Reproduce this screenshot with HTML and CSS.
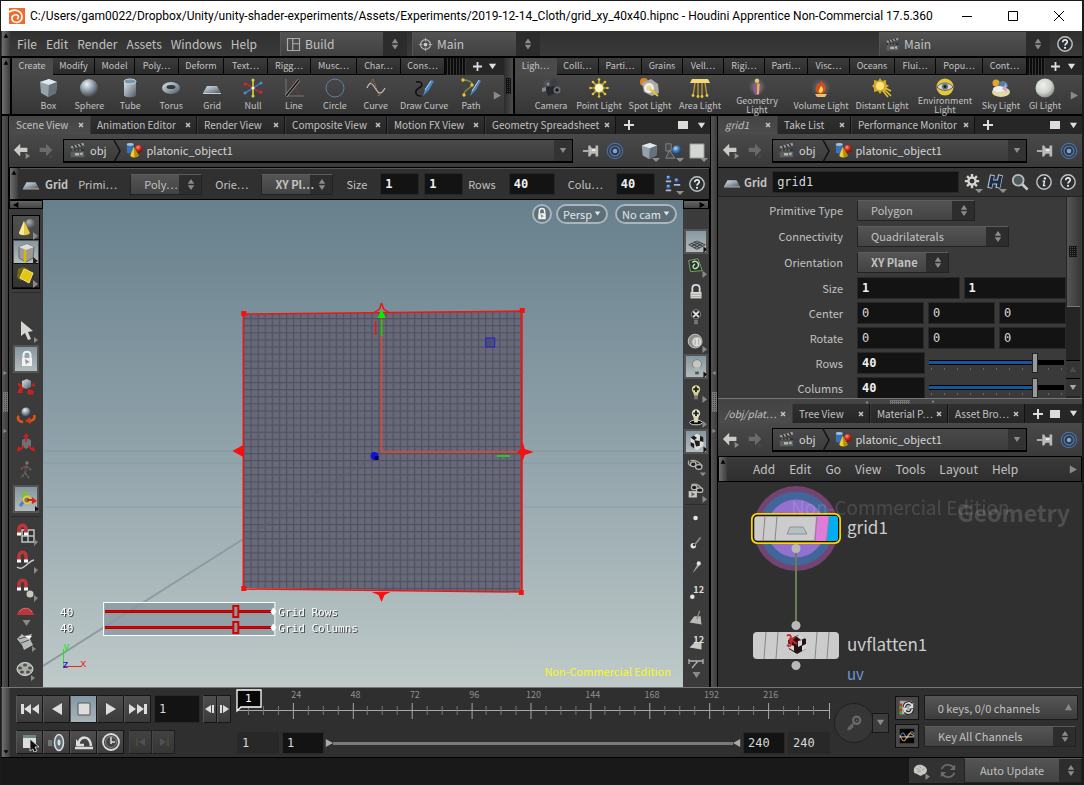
FILE: index.html
```html
<!DOCTYPE html>
<html lang="en">
<head>
<meta charset="utf-8">
<title>grid_xy_40x40.hipnc - Houdini Apprentice Non-Commercial</title>
<link rel="stylesheet" href="styles.css">
</head>
<body>
<svg class="sprite" aria-hidden="true">
  <defs>
    <linearGradient id="steel" x1="0" y1="0" x2="1" y2="1"><stop offset="0" stop-color="#dce3e8"/><stop offset=".5" stop-color="#98a4ad"/><stop offset="1" stop-color="#4d565e"/></linearGradient>
    <radialGradient id="ball" cx=".38" cy=".3" r=".75"><stop offset="0" stop-color="#eef3f6"/><stop offset=".5" stop-color="#8e99a3"/><stop offset="1" stop-color="#343b42"/></radialGradient>
    <radialGradient id="blueball" cx=".4" cy=".3" r=".7"><stop offset="0" stop-color="#b9d4f2"/><stop offset=".5" stop-color="#3f76b8"/><stop offset="1" stop-color="#173966"/></radialGradient>
    <radialGradient id="redball" cx=".4" cy=".3" r=".7"><stop offset="0" stop-color="#ff9a8a"/><stop offset=".5" stop-color="#d02a1c"/><stop offset="1" stop-color="#7d0d06"/></radialGradient>
    <radialGradient id="pearl" cx=".4" cy=".35" r=".7"><stop offset="0" stop-color="#f4f0f2"/><stop offset=".6" stop-color="#c9d4c8"/><stop offset="1" stop-color="#8d7e84"/></radialGradient>
    <radialGradient id="glow"><stop offset="0" stop-color="#fff6b0"/><stop offset=".5" stop-color="#e6c43c"/><stop offset="1" stop-color="#e6c43c" stop-opacity="0"/></radialGradient>
    <radialGradient id="halo"><stop offset=".3" stop-color="#ddd" stop-opacity=".7"/><stop offset="1" stop-color="#888" stop-opacity=".2"/></radialGradient>
    <linearGradient id="sky" x1="0" y1="0" x2="0" y2="1"><stop offset="0" stop-color="#67808c"/><stop offset=".52" stop-color="#91a3ab"/><stop offset="1" stop-color="#bfcac9"/></linearGradient>
    <pattern id="mesh" width="7.1" height="7.1" patternUnits="userSpaceOnUse" x="200" y="111"><rect width="8" height="8" fill="#676978"/><path d="M0 .5H8M.5 0V8" stroke="#4f5161" stroke-width="1.3"/></pattern>

    <symbol id="i-box" viewBox="0 0 20 20"><path d="M2 4L11 1l8 3-1 11-8 4-7-4z" fill="#96a2aa"/><path d="M2 4l9-3 8 3-8 3z" fill="#e1e8ec"/><path d="M11 7l8-3-1 11-8 4z" fill="#66717a"/></symbol>
    <symbol id="i-sphere" viewBox="0 0 20 20"><circle cx="10" cy="10" r="9" fill="url(#ball)"/></symbol>
    <symbol id="i-tube" viewBox="0 0 20 20"><path d="M4 3v14c0 3 12 3 12 0V3z" fill="url(#steel)"/><ellipse cx="10" cy="3.500" rx="6" ry="2.500" fill="#7899ad" stroke="#ccd5da"/></symbol>
    <symbol id="i-torus" viewBox="0 0 20 20"><ellipse cx="10" cy="10" rx="9" ry="6" fill="url(#steel)"/><ellipse cx="10" cy="9" rx="4.500" ry="2" fill="#31383e"/></symbol>
    <symbol id="i-grid" viewBox="0 0 20 20"><path d="M5 8h10l4 7H1z" fill="url(#steel)"/><path d="M1 15h18v1H1z" fill="#c8d0d4"/></symbol>
    <symbol id="i-null" viewBox="0 0 20 20"><path d="M10 2v16" stroke="#b7b92c" stroke-width="2"/><path d="M2 5l8 5 8 5" stroke="#bb2c2a" stroke-width="1.500"/><path d="M2 15l16-10" stroke="#4379b4" stroke-width="1.500"/><circle cx="10" cy="2" r="1.500" fill="#d7d93c"/><circle cx="10" cy="18" r="1.500" fill="#d7d93c"/><circle cx="2" cy="15" r="1.500" fill="#4f8dd0"/><circle cx="18" cy="5" r="1.500" fill="#4f8dd0"/><circle cx="2" cy="6" r="1.500" fill="#d23"/><circle cx="18" cy="14" r="1.500" fill="#d23"/><circle cx="10" cy="10" r="1.500" fill="#fff"/></symbol>
    <symbol id="i-line" viewBox="0 0 20 20"><path d="M2 1v17h18" stroke="#777" fill="none"/><path d="M8 4l8-2M10 8l6 9" stroke="#b33" stroke-dasharray="1.500 1.500"/><path d="M2 18L15 2" stroke="#999" stroke-width="3"/><path d="M2 18L15 2" stroke="#111" stroke-width="1.500"/></symbol>
    <symbol id="i-circle" viewBox="0 0 20 20"><circle cx="10" cy="10" r="9" fill="none" stroke="#5d80ad"/></symbol>
    <symbol id="i-curve" viewBox="0 0 20 20"><path d="M1 10L7 1l6 17 6-8" fill="none" stroke="#b98130" stroke-dasharray="1.500 1"/><path d="M1 10c3-7 5-5 8 0s6 8 10 0" fill="none" stroke="#bbb" stroke-width="1.200"/></symbol>
    <symbol id="i-draw" viewBox="0 0 20 20"><path d="M2 4c6-1 8 3 3 6s-4 8 2 8" fill="none" stroke="#101010" stroke-width="1.500"/><path d="M9 18l2-7 6-9 3 1-5 9z" fill="#4f86bf"/><path d="M11 12l6-9" stroke="#b1d2ef"/></symbol>
    <symbol id="i-path" viewBox="0 0 20 20"><path d="M2 2c6 0 9 2 9 5S1 12 3 18" fill="none" stroke="#7e8f35" stroke-width="1.300"/><path d="M9 18l2-6 7-10 2 1-5 9z" fill="#4f86bf"/><path d="M11 13l7-11" stroke="#b1d2ef"/><circle cx="2" cy="2" r="1.700" fill="#e7c62d"/><circle cx="11" cy="7" r="1.700" fill="#e7c62d"/><circle cx="3" cy="17" r="1.700" fill="#e7c62d"/></symbol>
    <symbol id="i-cam" viewBox="0 0 20 20"><circle cx="7" cy="6" r="4.500" fill="#4b5157"/><circle cx="13" cy="5" r="4" fill="#3a4046"/><path d="M4 9l10-1 1 7-8 3z" fill="#23282c"/><path d="M1 10l4-1v4l-4 1z" fill="#888"/><circle cx="16" cy="12" r="3.500" fill="#687078"/><circle cx="16" cy="12" r="1.700" fill="#15181a"/><circle cx="7" cy="6" r="1.500" fill="#888"/></symbol>
    <symbol id="i-point" viewBox="0 0 20 20"><path d="M10 1v18M1 10h18M4 4l12 12M16 4L4 16" stroke="#e0bf31" stroke-width="1.200"/><g fill="#e7c62d"><circle cx="10" cy="1.500" r="1.300"/><circle cx="10" cy="18.500" r="1.300"/><circle cx="1.500" cy="10" r="1.300"/><circle cx="18.500" cy="10" r="1.300"/><circle cx="4" cy="4" r="1.300"/><circle cx="16" cy="4" r="1.300"/><circle cx="4" cy="16" r="1.300"/><circle cx="16" cy="16" r="1.300"/></g><circle cx="10" cy="10" r="6" fill="url(#glow)"/><circle cx="10" cy="10" r="4" fill="#fff8c8"/></symbol>
    <symbol id="i-spot" viewBox="0 0 20 20"><circle cx="4" cy="4" r="4" fill="#e08320"/><path d="M2 5l9-4 7 5 1 9-7 3-8-4z" fill="#aaa"/><circle cx="9" cy="10" r="5" fill="#eee"/><circle cx="9" cy="10" r="2.500" fill="#e9d888"/><path d="M10 11l8 7" stroke="#e4c62c" stroke-width="2"/></symbol>
    <symbol id="i-area" viewBox="0 0 20 20"><path d="M2 1h16l2 4H0z" fill="#f3dc77"/><path d="M5 5L3 18M8 5v14M12 5v14M15 5l2 13" stroke="#caa62a" stroke-width="1.200"/><g fill="#e9c93b"><circle cx="3" cy="17.500" r="1.400"/><circle cx="8" cy="18.500" r="1.400"/><circle cx="12" cy="18.500" r="1.400"/><circle cx="17" cy="17.500" r="1.400"/></g></symbol>
    <symbol id="i-geo" viewBox="0 0 20 20"><circle cx="10" cy="10" r="9" fill="url(#halo)" opacity=".5"/><circle cx="10" cy="3" r="2.500" fill="#e6ca70"/><path d="M7 6h6l1 7-2 6H8l-2-6z" fill="#8b5ba0"/><path d="M10 6h3l-1 12h-2z" fill="#e8b43a"/></symbol>
    <symbol id="i-fire" viewBox="0 0 20 20"><circle cx="10" cy="10" r="9" fill="url(#halo)" opacity=".4"/><path d="M10 2c2 4 6 6 4 11-2 4-7 4-9 0-1-3 1-5 2-8l2 3z" fill="#df4a1c"/><path d="M10 8c2 2 3 4 1 6s-4 0-3-2z" fill="#ffe34d"/><path d="M4 16h12l-2 3H6z" fill="#e6c26a"/></symbol>
    <symbol id="i-sun" viewBox="0 0 20 20"><path d="M8 0l2 3 4-1v4l3 2-3 2v4l-4-1-2 3-2-3-4 1V10L0 8l2-2V2l4 1z" fill="#d7a829"/><circle cx="8" cy="8" r="4" fill="#fde77a"/><path d="M13 10l6 3M11 13l5 6M14 13l5 5" stroke="#e4c62c" stroke-width="1.500"/></symbol>
    <symbol id="i-eye" viewBox="0 0 20 20"><circle cx="10" cy="10" r="9.500" fill="#e3c83d"/><path d="M1 10c5-6 13-6 18 0-5 5-13 5-18 0z" fill="#d5d8da" stroke="#555"/><circle cx="10" cy="9.500" r="3.500" fill="#66727c"/><circle cx="10" cy="9.500" r="1.500" fill="#111"/></symbol>
    <symbol id="i-sky" viewBox="0 0 20 20"><circle cx="5" cy="5" r="3.500" fill="#e8a32a"/><path d="M7 9c0-8 10-8 10 0z" fill="#54809f"/><ellipse cx="10" cy="14" rx="9" ry="5" fill="#e4d8a8"/><ellipse cx="8" cy="11" rx="6" ry="3" fill="#eceef0"/><path d="M15 5l-4 6 5 3" fill="#c7a8c8"/></symbol>
    <symbol id="i-gi" viewBox="0 0 20 20"><circle cx="10" cy="10" r="9.500" fill="url(#pearl)"/></symbol>

    <symbol id="i-clap" viewBox="0 0 20 20"><path d="M2 5l15-4 1 3L3 8z" fill="#999"/><path d="M5 4l2 3M9 3l2 3M13 2l2 3" stroke="#222" stroke-width="1.500"/><path d="M2 8h16v10H2z" fill="#59605f"/><path d="M2 8h16v3H2z" fill="#333"/><path d="M4 9.500h2M8 9.500h2M12 9.500h2" stroke="#aaa"/><path d="M7 13h5v3H7zM13 13l3-1v4l-3-1z" fill="#b0b5b4"/></symbol>
    <symbol id="i-plato" viewBox="0 0 20 20"><path d="M1 3v9c0 2 8 2 8 0V3z" fill="#3a70b4"/><ellipse cx="5" cy="3" rx="4" ry="1.700" fill="#9fc1e4"/><circle cx="15" cy="8" r="4.500" fill="url(#redball)"/><path d="M9 6l6 10c-2 3-9 3-10 0z" fill="#f2cf2e"/><path d="M9 6l1 12c2 0 4-1 5-2z" fill="#b68c10"/></symbol>
    <symbol id="i-back" viewBox="0 0 20 20"><path d="M1 9l7-7v4.500h8v4.500H8V16z" fill="#c9cbc6"/><path d="M14 12l5 3.500-5 3.500z" fill="#8b8b8b"/></symbol>
    <symbol id="i-fwd" viewBox="0 0 20 20"><path d="M17 9l-7-7v4.500H3v4.500h7V16z" fill="#6a6a6a"/><path d="M14 13l4 3-4 3z" fill="#4a4a4a"/></symbol>
    <symbol id="i-pin" viewBox="0 0 20 20"><path d="M1 10h6" stroke="#ddd" stroke-width="1.500"/><path d="M7 4h2l2 3h4V4h3v12h-3v-3h-4l-2 3H7z" fill="#b9bbb8"/><path d="M11 8h4v2h-4z" fill="#eee"/></symbol>
    <symbol id="i-target" viewBox="0 0 20 20"><circle cx="10" cy="10" r="8.500" fill="#30394a" stroke="#4c6fa5" stroke-width="1.300"/><circle cx="10" cy="10" r="5.500" fill="none" stroke="#56789f" stroke-width="1.500"/><circle cx="10" cy="10" r="2.500" fill="#7ea3d8"/></symbol>
    <symbol id="i-help" viewBox="0 0 20 20"><circle cx="10" cy="10" r="8" fill="#2c3033" stroke="#bfc4c6" stroke-width="1.600"/><path d="M7.500 8c0-3.500 5.500-3.300 5 0-.2 1.600-2.500 1.800-2.500 3.800" fill="none" stroke="#eee" stroke-width="1.800"/><circle cx="10" cy="14.300" r="1.200" fill="#eee"/></symbol>
    <symbol id="i-info" viewBox="0 0 20 20"><circle cx="10" cy="10" r="8" fill="#2c3033" stroke="#bfc4c6" stroke-width="1.600"/><path d="M8.500 9h2l-1 5h2" fill="none" stroke="#eee" stroke-width="1.500"/><circle cx="11" cy="6" r="1.300" fill="#eee"/></symbol>
    <symbol id="i-search" viewBox="0 0 20 20"><circle cx="8" cy="8" r="6" fill="#4d5a60" stroke="#b9bcbc" stroke-width="2"/><path d="M12.500 12.500l6 6" stroke="#c9cccc" stroke-width="3"/></symbol>
    <symbol id="i-gear" viewBox="0 0 20 20"><path d="M10 1v16M2 9h16M4.500 3.500l11 11M15.500 3.500l-11 11" stroke="#d4d4d0" stroke-width="2.600"/><circle cx="10" cy="9" r="4" fill="#333" stroke="#d4d4d0" stroke-width="2.500"/></symbol>
    <symbol id="i-hwrite" viewBox="0 0 20 20"><path d="M6 2L3 17M15 2l-3 15M5 10h9" stroke="#b8c4d0" stroke-width="5.500"/><path d="M6 3L3.500 16M15 3l-2.500 13M5 10h9" stroke="#172a47" stroke-width="3.500"/></symbol>
    <symbol id="i-people" viewBox="0 0 20 20"><g fill="url(#blueball)"><circle cx="5" cy="3" r="2.500"/><circle cx="14" cy="6" r="2.500"/><circle cx="5" cy="13" r="2.500"/></g><path d="M2 7h6M11 11h7M2 17h6" stroke="#aebac8" stroke-width="2"/></symbol>
    <symbol id="i-shapes" viewBox="0 0 20 20"><path d="M2 2h6v8H2zM6 9l6 9H2z" fill="#484c50" stroke="#888"/><circle cx="14" cy="9" r="5" fill="url(#blueball)"/></symbol>
    <symbol id="i-square" viewBox="0 0 20 20"><path d="M2 2h16v16H2z" fill="#d4d6d2" stroke="#777"/></symbol>
    <symbol id="i-layout" viewBox="0 0 20 20"><path d="M2 2h16v16H2zM9 2v16M9 9h9" fill="none" stroke="#aaa" stroke-width="1.600"/></symbol>
    <symbol id="i-cross" viewBox="0 0 20 20"><circle cx="10" cy="10" r="6.500" fill="none" stroke="#bbb" stroke-width="1.500"/><circle cx="10" cy="10" r="2.500" fill="#ccc"/><path d="M10 1v5M10 14v5M1 10h5M14 10h5" stroke="#bbb"/></symbol>
    <symbol id="i-updown" viewBox="0 0 10 14"><path d="M5 0l4 6H1zM5 14l4-6H1z" fill="#8b8b8b"/></symbol>
    <symbol id="i-down" viewBox="0 0 10 10"><path d="M1 2h8L5 8z" fill="currentColor"/></symbol>
    <symbol id="i-up" viewBox="0 0 10 10"><path d="M1 8h8L5 1z" fill="currentColor"/></symbol>
    <symbol id="i-right" viewBox="0 0 10 10"><path d="M1 0l9 5-9 5z" fill="currentColor"/></symbol>
    <symbol id="i-left" viewBox="0 0 10 10"><path d="M9 0L0 5l9 5z" fill="currentColor"/></symbol>
    <symbol id="i-plus" viewBox="0 0 10 10"><path d="M5 0v10M0 5h10" stroke="#ddd" stroke-width="2"/></symbol>
    <symbol id="i-x" viewBox="0 0 10 10"><path d="M3 3l4 4M7 3L3 7" stroke="#c4c4c4" stroke-width="1.500"/></symbol>
    <symbol id="i-pane" viewBox="0 0 10 8"><path d="M0 0h10v8H0z" fill="#dcdcd8"/></symbol>

    <symbol id="s-more" viewBox="0 0 24 24"><path d="M19 16l5 4-5 4z" fill="#8a8a8a"/></symbol>
    <symbol id="s-cone" viewBox="0 0 24 24"><circle cx="16" cy="8" r="5" fill="url(#ball)" opacity=".6"/><path d="M10 5l6 12c-2 3-10 3-11 0z" fill="#e3c842"/><path d="M10 5v14c-3 0-5-1-5-2z" fill="#f7ea9a"/><use href="#s-more"/></symbol>
    <symbol id="s-edge" viewBox="0 0 24 24"><path d="M5 6l8-3 7 3-1 11-7 4-7-4z" fill="#9a9a96" stroke="#666"/><path d="M5 6l8-3 7 3-8 3z" fill="#ddd"/><path d="M11 9v12" stroke="#e0b800" stroke-width="2.500"/><path d="M19 16l5 4-5 4z" fill="#222"/></symbol>
    <symbol id="s-face" viewBox="0 0 24 24"><path d="M4 5l5-2 6 2-8 12-4-4z" fill="#766812"/><path d="M10 5l9 4-4 10-9-5z" fill="#e2c517" stroke="#f7e56c"/><use href="#s-more"/></symbol>
    <symbol id="s-arrow" viewBox="0 0 24 24"><path d="M7 2v15l4-3 3 7 3-1-3-7 5-1z" fill="#d6d6d2"/><path d="M20 18l4 3-4 3z" fill="#8a8a8a"/></symbol>
    <symbol id="s-lock" viewBox="0 0 24 24"><path d="M7 11h10v8H7z" fill="#f2f2f0"/><path d="M8.500 11V8c0-4.500 7-4.500 7 0v3" fill="none" stroke="#f2f2f0" stroke-width="2"/><path d="M10 12l5 3-3 1-1 2z" fill="#8a979b"/></symbol>
    <symbol id="s-move" viewBox="0 0 24 24"><path d="M4 8l4 1-1 3 3 1-2 3 1 2-6 0 2-4 1-2-2-1zM20 7l1 5-4-1zM14 14l6 2-1 4-6-1z" fill="#c8221b"/><path d="M8 6l5-2 4 2v6l-5 2-4-2z" fill="url(#steel)"/></symbol>
    <symbol id="s-rot" viewBox="0 0 24 24"><path d="M5 13c-3 3 1 6 4 6M20 12c2 4-2 6-5 6" fill="none" stroke="#e05415" stroke-width="2.500"/><path d="M16 14l-5 4 6 3z" fill="#d63a14"/><circle cx="12" cy="9" r="4.500" fill="url(#ball)"/></symbol>
    <symbol id="s-scale" viewBox="0 0 24 24"><path d="M8 9l4-2 5 2v6l-5 3-4-3z" fill="#6b7378"/><path d="M12 2l3 4h-2v5h-2V6H9zM3 21l1-6 2 2 4-3v2l-3 3zM21 21l-1-6-2 2-4-3v2l3 3z" fill="#c8221b"/></symbol>
    <symbol id="s-pose" viewBox="0 0 24 24"><circle cx="13" cy="4" r="1.700" fill="#777"/><path d="M12 7l-5 3M12 7l5 4M12 8l-1 6-4 5M11 14l4 5" stroke="#666" stroke-width="1.700" stroke-dasharray="3 1" fill="none"/><path d="M11 7l1 6" stroke="#833" stroke-width="1.500"/></symbol>
    <symbol id="s-handle" viewBox="0 0 24 24"><path d="M5 19l5-6" stroke="#4c7fc0" stroke-width="3"/><path d="M7 8l2-5 4 4-1 5-3 1z" fill="#7fbf2e"/><circle cx="12" cy="13" r="3.500" fill="#777" stroke="#e8ce2a" stroke-width="1.800"/><path d="M12 12h5v-2l5 4-5 3v-3h-5z" fill="#d8241b"/><path d="M20 19l4 3-4 3z" fill="#111"/></symbol>
    <symbol id="s-maggrid" viewBox="0 0 24 24"><path d="M8 8h12v12H8zM14 8v12M8 14h12" fill="#2c3434" stroke="#bfc4be" stroke-width="1.500"/><path d="M5 12V7c0-5 7-5 7 0v5" fill="none" stroke="#c0353a" stroke-width="3.500"/><path d="M3 12h4M10 12h4" stroke="#fff" stroke-width="3"/><path d="M20 17l4 3-4 4z" fill="#8a8a8a"/></symbol>
    <symbol id="s-magcurve" viewBox="0 0 24 24"><path d="M3 17c6 5 11-6 17-7" fill="none" stroke="#c8ccc6" stroke-width="1.500"/><path d="M5 11V6c0-5 7-5 7 0v5" fill="none" stroke="#c0353a" stroke-width="3.500"/><path d="M3 11h4M10 11h4" stroke="#fff" stroke-width="3"/><path d="M20 17l4 3-4 4z" fill="#8a8a8a"/></symbol>
    <symbol id="s-magpt" viewBox="0 0 24 24"><circle cx="16" cy="16" r="3.500" fill="#c9c9c0"/><path d="M5 11V6c0-5 7-5 7 0v5" fill="none" stroke="#c0353a" stroke-width="3.500"/><path d="M3 11h4M10 11h4" stroke="#fff" stroke-width="3"/><path d="M20 17l4 3-4 4z" fill="#8a8a8a"/></symbol>
    <symbol id="s-maghalf" viewBox="0 0 24 12"><path d="M3 9c1-8 16-8 17 0z" fill="#c0353a"/><path d="M5 6c3-5 10-5 13 0" fill="none" stroke="#e07a7c"/></symbol>
    <symbol id="s-flip" viewBox="0 0 24 24"><path d="M3 9l5-5 2 2 8-2-2 5 3 6-9 5-2-5z" fill="#b6bab8"/><path d="M5 9l10-3M7 13l8-3" stroke="#4c5456"/><path d="M11 6l7 0-3 3z" fill="#fff"/><path d="M18 16l4 3-4 3z" fill="#8a8a8a"/></symbol>
    <symbol id="s-reel" viewBox="0 0 24 24"><ellipse cx="11" cy="11" rx="8" ry="6.500" fill="#aaaca6" stroke="#d6d6d0"/><g fill="#4c504e"><ellipse cx="11" cy="7" rx="2" ry="1.500"/><ellipse cx="6" cy="10" rx="2" ry="1.500"/><ellipse cx="16" cy="10" rx="2" ry="1.500"/><ellipse cx="8" cy="14" rx="2" ry="1.500"/><ellipse cx="14" cy="14" rx="2" ry="1.500"/></g><path d="M17 17l4 3-4 3z" fill="#8a8a8a"/></symbol>

    <symbol id="v-plane" viewBox="0 0 24 24"><path d="M3 15l9-4 9 4-9 5z" fill="#8b989c" stroke="#444"/><path d="M6 13.500l9 5M9 12l9 4.500M6 16.500l9-4M9 18.500l9-5" stroke="#333"/><path d="M19 17l4 3-4 4z" fill="#111"/></symbol>
    <symbol id="v-ref" viewBox="0 0 24 24"><path d="M4 5l10-2 5 13-13 1z" fill="#29342a" stroke="#79a868"/><path d="M8 7c5-4 9 3 5 6s-6-3-2-4" fill="none" stroke="#c6e0c4" stroke-width="1.500"/><use href="#s-more"/></symbol>
    <symbol id="v-lock" viewBox="0 0 24 24"><path d="M6 12h12v7H6z" fill="#d9d9d4"/><path d="M6 14.500h12M6 17h12" stroke="#a9a9a4"/><path d="M8 12V8c0-5 8-5 8 0v4" fill="none" stroke="#d9d9d4" stroke-width="2"/></symbol>
    <symbol id="v-nolight" viewBox="0 0 24 24"><circle cx="12" cy="9" r="5" fill="#222" stroke="#888"/><path d="M9 6l6 6M15 6l-6 6" stroke="#ddd" stroke-width="2"/><path d="M10 15h4v5h-4z" fill="#777"/></symbol>
    <symbol id="v-balls" viewBox="0 0 24 24"><circle cx="11" cy="11" r="7.500" fill="#8f8f8a" stroke="#d0d0cc"/><circle cx="13" cy="12" r="5.500" fill="#deded8" stroke="#999"/><path d="M11 9v6M15 9v6" stroke="#999"/><use href="#s-more"/></symbol>
    <symbol id="v-bulb" viewBox="0 0 24 24"><circle cx="12" cy="9" r="5" fill="#c5c8bf" stroke="#777"/><path d="M9 12h6l-1 5h-4z" fill="#b3b6ad"/><path d="M10 17h4v3h-4z" fill="#555"/><path d="M19 17l4 3-4 4z" fill="#111"/></symbol>
    <symbol id="v-addbulb" viewBox="0 0 24 24"><circle cx="12" cy="9" r="4.500" fill="#dedd9f"/><path d="M9 12h6l-1 4h-4z" fill="#cdcc92"/><path d="M12 6v6M9 9h6" stroke="#222" stroke-width="2"/><path d="M10 16h4v4h-4z" fill="#777"/><use href="#s-more"/></symbol>
    <symbol id="v-shadow" viewBox="0 0 24 24"><ellipse cx="12" cy="18" rx="7" ry="2.500" fill="#080808" stroke="#ddd"/><circle cx="12" cy="8" r="4.500" fill="#e8e8c8"/><path d="M9 11h6l-1 7h-4z" fill="#d8d8b8"/><path d="M12 5v6M9 8h6" stroke="#222" stroke-width="2"/><use href="#s-more"/></symbol>
    <symbol id="v-check" viewBox="0 0 24 24"><path d="M5 7l7-4 7 4v9l-7 5-7-5z" fill="#ddd"/><path d="M5 7l3.500-2 3.500 2.500L9 10zM15.500 5L19 7v5l-4-1zM9 10l6 1v5l-4 1zM5 12l4 2v5l-4-3z" fill="#1c1c1c"/><path d="M19 17l4 3-4 4z" fill="#111"/></symbol>
    <symbol id="v-glass" viewBox="0 0 24 24"><path d="M4 5c-1 4 1 6 3 5M6 5c5-1 9 1 13 6" fill="none" stroke="#a9aca7" stroke-width="1.500"/><ellipse cx="9" cy="9" rx="3" ry="2.500" fill="#1b1e1f" stroke="#b8bab5" stroke-width="1.300"/><ellipse cx="15" cy="12" rx="3.500" ry="2.500" fill="#1b1e1f" stroke="#b8bab5" stroke-width="1.300"/><path d="M16 18h7l-3.500 4z" fill="#8a8a8a"/></symbol>
    <symbol id="v-glass2" viewBox="0 0 24 24"><path d="M7 4c5-2 9 1 12 5" fill="none" stroke="#a9aca7" stroke-width="1.500"/><ellipse cx="10" cy="7" rx="3" ry="2.500" fill="#1b1e1f" stroke="#b8bab5" stroke-width="1.300"/><ellipse cx="16" cy="10" rx="3.500" ry="2.500" fill="#1b1e1f" stroke="#b8bab5" stroke-width="1.300"/><path d="M4 11h9v7H4z" fill="#c8c8c2"/><path d="M7 12l4 2.500-4 2.500z" fill="#666"/><use href="#s-more"/></symbol>
    <symbol id="v-dot" viewBox="0 0 24 24"><circle cx="11.500" cy="12" r="2.500" fill="#e5e5e0"/></symbol>
    <symbol id="v-norm" viewBox="0 0 24 24"><path d="M9 16l8-10" stroke="#7e8a90" stroke-width="2"/><circle cx="9" cy="15" r="3" fill="#e5e5e0"/><circle cx="10" cy="14" r="1.500" fill="#333"/></symbol>
    <symbol id="v-trail" viewBox="0 0 24 24"><path d="M8 18l6-11 2 2z" fill="#a9aca7"/><circle cx="15" cy="7" r="2.300" fill="#e5e5e0"/></symbol>
    <symbol id="v-ptnum" viewBox="0 0 24 24"><text x="9" y="12" font-size="10" font-weight="700" fill="#ddd">12</text><circle cx="8" cy="16" r="2.500" fill="#e5e5e0"/></symbol>
    <symbol id="v-prim" viewBox="0 0 24 24"><path d="M5 17l5-7 7 0 1 9z" fill="#b9bbb6"/><path d="M13 13l3-9" stroke="#888" stroke-width="1.500"/></symbol>
    <symbol id="v-primnum" viewBox="0 0 24 24"><path d="M5 17l6-6h7v8z" fill="#c9cbc6"/><text x="9" y="12" font-size="10" font-weight="700" fill="#ddd">12</text></symbol>
    <symbol id="v-vert" viewBox="0 0 24 12"><path d="M5 3h14M5 1v5M19 1v5M8 10l6-7" stroke="#aeb2ae" stroke-width="1.300"/></symbol>
  </defs>
</svg>

<div class="app">
  <header class="titlebar">
    <svg class="logo" viewBox="0 0 16 16" aria-hidden="true"><path d="M0 0h16v16H0z" fill="#f26a2b"/><path d="M0 4c6-4 13-1 13 5 0 5-6 7-9 4-3-4 1-7 4-6 2 1 2 3 0 4" fill="none" stroke="#fff" stroke-width="1.700"/></svg>
    <h1>C:/Users/gam0022/Dropbox/Unity/unity-shader-experiments/Assets/Experiments/2019-12-14_Cloth/grid_xy_40x40.hipnc - Houdini Apprentice Non-Commercial 17.5.360</h1>
    <div class="winbtns">
      <button aria-label="Minimize"><svg viewBox="0 0 12 12"><path d="M1 6.500h10" stroke="#000"/></svg></button>
      <button aria-label="Maximize"><svg viewBox="0 0 12 12"><path d="M1.500 1.500h9v9h-9z" fill="none" stroke="#000"/></svg></button>
      <button aria-label="Close"><svg viewBox="0 0 12 12"><path d="M1 1l10 10M11 1L1 11" stroke="#000"/></svg></button>
    </div>
  </header>

  <nav class="menubar">
    <span class="handle"><svg><use href="#i-up"/></svg></span>
    <div class="menus"><button>File</button><button>Edit</button><button>Render</button><button>Assets</button><button>Windows</button><button>Help</button></div>
    <div class="combo desk"><svg class="ic"><use href="#i-layout"/></svg><select aria-label="Desktop"><option>Build</option></select><svg class="ud"><use href="#i-updown"/></svg></div>
    <div class="combo radial"><svg class="ic"><use href="#i-cross"/></svg><select aria-label="Radial menu"><option>Main</option></select><svg class="ud"><use href="#i-updown"/></svg></div>
    <div class="combo scene"><svg class="ic"><use href="#i-clap"/></svg><select aria-label="Main scene"><option>Main</option></select><svg class="ud"><use href="#i-updown"/></svg></div>
    <button class="icon" aria-label="Help"><svg><use href="#i-help"/></svg></button>
  </nav>

  <div class="shelves">
    <span class="handle"><svg><use href="#i-up"/></svg></span>
    <section class="shelf shelf-a">
      <div class="shelf-tabs"><button class="on">Create</button><button>Modify</button><button>Model</button><button>Poly…</button><button>Deform</button><button>Text…</button><button>Rigg…</button><button>Musc…</button><button>Char…</button><button>Cons…</button><span class="stripes"></span><span class="extra"><svg><use href="#i-plus"/></svg><svg><use href="#i-down"/></svg></span></div>
      <div class="tools">
        <button><svg><use href="#i-box"/></svg>Box</button><button><svg><use href="#i-sphere"/></svg>Sphere</button><button><svg><use href="#i-tube"/></svg>Tube</button><button><svg><use href="#i-torus"/></svg>Torus</button><button><svg><use href="#i-grid"/></svg>Grid</button><button><svg><use href="#i-null"/></svg>Null</button><button><svg><use href="#i-line"/></svg>Line</button><button><svg><use href="#i-circle"/></svg>Circle</button><button><svg><use href="#i-curve"/></svg>Curve</button><button><svg><use href="#i-draw"/></svg>Draw Curve</button><button><svg><use href="#i-path"/></svg>Path</button><span class="next"><svg><use href="#i-right"/></svg></span>
      </div>
    </section>
    <span class="shelf-grip"><i class="dots"></i></span>
    <section class="shelf shelf-b">
      <div class="shelf-tabs"><button class="on">Ligh…</button><button>Colli…</button><button>Parti…</button><button>Grains</button><button>Vell…</button><button>Rigi…</button><button>Parti…</button><button>Visc…</button><button>Oceans</button><button>Flui…</button><button>Popu…</button><button>Cont…</button><span class="stripes"></span><span class="extra"><svg><use href="#i-plus"/></svg><svg><use href="#i-down"/></svg></span></div>
      <div class="tools">
        <button><svg><use href="#i-cam"/></svg>Camera</button><button><svg><use href="#i-point"/></svg>Point Light</button><button><svg><use href="#i-spot"/></svg>Spot Light</button><button><svg><use href="#i-area"/></svg>Area Light</button><button class="two"><svg><use href="#i-geo"/></svg>Geometry<br>Light</button><button><svg><use href="#i-fire"/></svg>Volume Light</button><button><svg><use href="#i-sun"/></svg>Distant Light</button><button class="two"><svg><use href="#i-eye"/></svg>Environment<br>Light</button><button><svg><use href="#i-sky"/></svg>Sky Light</button><button><svg><use href="#i-gi"/></svg>GI Light</button><span class="next"><svg><use href="#i-right"/></svg></span>
      </div>
    </section>
  </div>

  <main class="work">
    <span class="gutter"><svg><use href="#i-right"/></svg><i class="dots"></i><svg><use href="#i-right"/></svg></span>
    <section class="pane scene-pane">
      <div class="tabs tabs-scene">
        <button class="on">Scene View<svg><use href="#i-x"/></svg></button><button>Animation Editor<svg><use href="#i-x"/></svg></button><button>Render View<svg><use href="#i-x"/></svg></button><button>Composite View<svg><use href="#i-x"/></svg></button><button>Motion FX View<svg><use href="#i-x"/></svg></button><button>Geometry Spreadsheet<svg><use href="#i-x"/></svg></button>
        <span class="tab-end"><svg class="plus"><use href="#i-plus"/></svg><svg class="pn"><use href="#i-pane"/></svg><svg class="dn"><use href="#i-down"/></svg></span>
      </div>
      <div class="pathbar">
        <button class="icon" aria-label="Back"><svg><use href="#i-back"/></svg></button><button class="icon" aria-label="Forward"><svg><use href="#i-fwd"/></svg></button>
        <div class="path"><svg class="ic"><use href="#i-clap"/></svg><a href="#obj">obj</a><svg class="chev" viewBox="0 0 8 22"><path d="M1 0l6 11-6 11" fill="none" stroke="#111" stroke-width="1.500"/></svg><svg class="ic"><use href="#i-plato"/></svg><a href="#platonic">platonic_object1</a><button class="drop" aria-label="Path history"><svg><use href="#i-down"/></svg></button></div>
        <button class="icon" aria-label="Pin"><svg><use href="#i-pin"/></svg></button><button class="icon" aria-label="Link"><svg><use href="#i-target"/></svg></button>
        <span class="view-icons"><button class="icon more" aria-label="Shading"><svg><use href="#i-box"/></svg></button><button class="icon more" aria-label="Objects"><svg><use href="#i-shapes"/></svg></button><button class="icon more" aria-label="Layout"><svg><use href="#i-square"/></svg></button></span>
      </div>
      <div class="opbar">
        <span class="handle"><svg><use href="#i-up"/></svg></span>
        <div class="opitems">
          <svg class="ic"><use href="#i-grid"/></svg><b>Grid</b>
          <label for="op-prim">Primi…</label><span class="pick w72"><select id="op-prim"><option>Poly…</option></select><svg class="ud"><use href="#i-updown"/></svg></span>
          <label for="op-ori">Orie…</label><span class="pick w72"><select id="op-ori" class="bold"><option>XY Pl…</option></select><svg class="ud"><use href="#i-updown"/></svg></span>
          <label for="op-sx">Size</label><input id="op-sx" class="field bold w38" value="1"><input aria-label="Size Y" class="field bold w38" value="1">
          <label for="op-r">Rows</label><input id="op-r" class="field bold w46" value="40">
          <label for="op-c">Colu…</label><input id="op-c" class="field bold w38" value="40">
          <span class="view-icons"><button class="icon more" aria-label="Groups"><svg><use href="#i-people"/></svg></button><button class="icon" aria-label="Help"><svg><use href="#i-help"/></svg></button></span>
        </div>
      </div>
      <div class="stage">
        <div class="side side-l">
          <span class="grab"><svg><use href="#i-left"/></svg></span>
          <div class="group"><button aria-label="Objects"><svg><use href="#s-cone"/></svg></button><button class="on" aria-label="Edges"><svg><use href="#s-edge"/></svg></button><button aria-label="Primitives"><svg><use href="#s-face"/></svg></button></div>
          <hr>
          <div class="stack first"><button aria-label="Select"><svg><use href="#s-arrow"/></svg></button><button class="on" aria-label="Secure selection"><svg><use href="#s-lock"/></svg></button><button aria-label="Move"><svg><use href="#s-move"/></svg></button><button aria-label="Rotate"><svg><use href="#s-rot"/></svg></button><button aria-label="Scale"><svg><use href="#s-scale"/></svg></button><button aria-label="Pose"><svg><use href="#s-pose"/></svg></button><button class="on" aria-label="Handles"><svg><use href="#s-handle"/></svg></button></div>
          <hr>
          <div class="stack"><button aria-label="Snap to grid"><svg><use href="#s-maggrid"/></svg></button><button aria-label="Snap to curve"><svg><use href="#s-magcurve"/></svg></button><button aria-label="Snap to point"><svg><use href="#s-magpt"/></svg></button><svg class="half"><use href="#s-maghalf"/></svg><svg class="morearrow"><use href="#i-down"/></svg><button aria-label="Flipbook"><svg><use href="#s-flip"/></svg></button><button aria-label="Render"><svg><use href="#s-reel"/></svg></button></div>
        </div>
        <div class="viewport">
          <svg class="scene-art" viewBox="0 0 639 487" preserveAspectRatio="none">
            <rect width="639" height="487" fill="url(#sky)"/>
            <path d="M0 251h639M0 263h639M0 307h639" stroke="#76868e" stroke-opacity=".35"/>
            <path d="M0 466L200 339" stroke="#8d9aa2" stroke-width="2"/>
            <path d="M200 114L478 111 477 392 200 388z" fill="url(#mesh)"/>
            <path d="M200 339L330 257" stroke="#596270" stroke-width="2" opacity=".6"/>
            <path d="M478 111L200 114V389L477 392" fill="none" stroke="#f01414" stroke-width="1.500"/>
            <path d="M478 111V392" stroke="#f01414" stroke-width="2"/>
            <path d="M338 114V252H477" fill="none" stroke="#e8452f" stroke-width="1.500"/>
            <path d="M338 136v-16" stroke="#00e000" stroke-width="1.500"/><path d="M338 109l4 9h-8z" fill="#00f000"/><path d="M453 256h13" stroke="#2cc42c" stroke-width="2"/>
            <path d="M332 121v14M338 103l-2 6-6 4M338 103l2 6 6 4" fill="none" stroke="#f01414" stroke-width="1.500"/>
            <path d="M189 251l11-6v12zM490 252l-9-3-2-7-2 7-4 3 4 3 2 6 2-6zM338 402l-3-7-7-3h19l-6 3z" fill="#f81010"/>
            <path d="M198 111h5v5h-5zM476 108h5v5h-5zM475 390h5v5h-5zM198 386h5v5h-5z" fill="#f81010"/>
            <path d="M442 138h9v9h-9z" fill="#4d4e75" stroke="#1e1ed0"/>
            <circle cx="331" cy="256" r="4" fill="#1212d8"/><path d="M331 256h4v4h-4z" fill="#000060"/>
            <path d="M60.500 402.500h171v33h-171z" fill="#8999a0" fill-opacity=".8" stroke="#fff"/>
            <path d="M62 411.500h167M62 427.500h167" stroke="#9c0000" stroke-width="3"/><path d="M62 411.500h167M62 427.500h167" stroke="#e80000" stroke-width="1.500"/>
            <path d="M190 406h5v11h-5zM190 422h5v11h-5z" fill="#8999a0" stroke="#d80000" stroke-width="2"/>
            <path d="M227 411.500l3-4 3 4-3 4zM227 427.500l3-4 3 4-3 4z" fill="#fff"/>
            <path d="M20.500 466v-17" stroke="#20e820"/><path d="M20 466.500h18" stroke="#f02020"/>
            <g class="hud"><text x="17" y="416">40</text><text x="17" y="432">40</text><text x="235" y="416">Grid Rows</text><text x="235" y="432">Grid Columns</text></g>
            <g class="axis"><text x="20" y="450" fill="#20e820">y</text><text x="37" y="467" fill="#f02020">x</text><text x="19" y="468" fill="#1010f0">z</text></g>
          </svg>
          <div class="camera-bar"><button class="round" aria-label="Lock camera"><svg><use href="#s-lock"/></svg></button><button>Persp<svg><use href="#i-down"/></svg></button><button>No cam<svg><use href="#i-down"/></svg></button></div>
          <p class="edition">Non-Commercial Edition</p>
        </div>
        <div class="side side-r">
          <span class="grab"><svg><use href="#i-right"/></svg></span>
          <div class="stack first"><button class="on" aria-label="Reference plane"><svg><use href="#v-plane"/></svg></button><button aria-label="Guides"><svg><use href="#v-ref"/></svg></button><button aria-label="Lock"><svg><use href="#v-lock"/></svg></button><button aria-label="No lighting"><svg><use href="#v-nolight"/></svg></button><button aria-label="Headlight"><svg><use href="#v-balls"/></svg></button><button class="on" aria-label="Normal lighting"><svg><use href="#v-bulb"/></svg></button><button aria-label="High quality"><svg><use href="#v-addbulb"/></svg></button><button aria-label="Shadows"><svg><use href="#v-shadow"/></svg></button><button class="on" aria-label="Materials"><svg><use href="#v-check"/></svg></button><button aria-label="Visibility"><svg><use href="#v-glass"/></svg></button><button aria-label="Snapshot"><svg><use href="#v-glass2"/></svg></button></div>
          <hr>
          <div class="stack"><button aria-label="Points"><svg><use href="#v-dot"/></svg></button><button aria-label="Point normals"><svg><use href="#v-norm"/></svg></button><button aria-label="Point trails"><svg><use href="#v-trail"/></svg></button><button aria-label="Point numbers"><svg><use href="#v-ptnum"/></svg></button><button aria-label="Primitive normals"><svg><use href="#v-prim"/></svg></button><button aria-label="Primitive numbers"><svg><use href="#v-primnum"/></svg></button><svg class="half"><use href="#v-vert"/></svg><svg class="morearrow"><use href="#i-down"/></svg></div>
        </div>
      </div>
    </section>
    <span class="gutter mid"><svg><use href="#i-left"/></svg><i class="dots"></i><svg><use href="#i-right"/></svg></span>
    <div class="right">
      <section class="pane params-pane">
        <div class="tabs tabs-param">
          <button class="on it">grid1<svg><use href="#i-x"/></svg></button><button>Take List<svg><use href="#i-x"/></svg></button><button>Performance Monitor<svg><use href="#i-x"/></svg></button>
          <span class="tab-end"><svg class="plus"><use href="#i-plus"/></svg><svg class="pn"><use href="#i-pane"/></svg><svg class="dn"><use href="#i-down"/></svg></span>
        </div>
        <div class="pathbar">
          <button class="icon" aria-label="Back"><svg><use href="#i-back"/></svg></button><button class="icon" aria-label="Forward"><svg><use href="#i-fwd"/></svg></button>
          <div class="path"><svg class="ic"><use href="#i-clap"/></svg><a href="#obj">obj</a><svg class="chev" viewBox="0 0 8 22"><path d="M1 0l6 11-6 11" fill="none" stroke="#111" stroke-width="1.500"/></svg><svg class="ic"><use href="#i-plato"/></svg><a href="#platonic">platonic_object1</a><button class="drop" aria-label="Path history"><svg><use href="#i-down"/></svg></button></div>
          <button class="icon" aria-label="Pin"><svg><use href="#i-pin"/></svg></button><button class="icon" aria-label="Link"><svg><use href="#i-target"/></svg></button>
        </div>
        <div class="nodebar"><svg class="ic"><use href="#i-grid"/></svg><label for="nodename">Grid</label><input id="nodename" class="field" value="grid1"><button class="icon more" aria-label="Settings"><svg><use href="#i-gear"/></svg></button><button class="icon more" aria-label="Houdini"><svg><use href="#i-hwrite"/></svg></button><button class="icon" aria-label="Search"><svg><use href="#i-search"/></svg></button><button class="icon" aria-label="Info"><svg><use href="#i-info"/></svg></button><button class="icon" aria-label="Help"><svg><use href="#i-help"/></svg></button></div>
        <div class="param-area">
          <div class="params">
            <div class="row tall"><label for="p1">Primitive Type</label><span class="pick w118"><select id="p1"><option>Polygon</option></select><svg class="ud"><use href="#i-updown"/></svg></span></div>
            <div class="row tall"><label for="p2">Connectivity</label><span class="pick w152"><select id="p2"><option>Quadrilaterals</option></select><svg class="ud"><use href="#i-updown"/></svg></span></div>
            <div class="row tall"><label for="p3">Orientation</label><span class="pick w92"><select id="p3" class="bold"><option>XY Plane</option></select><svg class="ud"><use href="#i-updown"/></svg></span></div>
            <div class="row"><label for="p4">Size</label><span class="fields"><input id="p4" class="field bold" value="1"><input aria-label="Size Y" class="field bold" value="1"></span></div>
            <div class="row"><label for="p5">Center</label><span class="fields"><input id="p5" class="field" value="0"><input aria-label="Center Y" class="field" value="0"><input aria-label="Center Z" class="field" value="0"></span></div>
            <div class="row"><label for="p6">Rotate</label><span class="fields"><input id="p6" class="field" value="0"><input aria-label="Rotate Y" class="field" value="0"><input aria-label="Rotate Z" class="field" value="0"></span></div>
            <div class="row"><label for="p7">Rows</label><span class="fields"><input id="p7" class="field bold w68" value="40"><input type="range" aria-label="Rows slider" min="1" max="50" value="40"></span></div>
            <div class="row"><label for="p8">Columns</label><span class="fields"><input id="p8" class="field bold w68" value="40"><input type="range" aria-label="Columns slider" min="1" max="50" value="40"></span></div>
          </div>
          <div class="vscroll"><span class="thumb"><i class="dots"></i></span><svg class="dim"><use href="#i-up"/></svg><svg class="lit"><use href="#i-down"/></svg></div>
        </div>
      </section>
      <span class="hsplit"><svg><use href="#i-up"/></svg><i class="dots"></i><svg><use href="#i-down"/></svg></span>
      <section class="pane net-pane">
        <div class="tabs tabs-net">
          <button class="on it">/obj/plat…<svg><use href="#i-x"/></svg></button><button>Tree View<svg><use href="#i-x"/></svg></button><button>Material P…<svg><use href="#i-x"/></svg></button><button>Asset Bro…<svg><use href="#i-x"/></svg></button>
          <span class="tab-end"><svg class="plus"><use href="#i-plus"/></svg><svg class="pn"><use href="#i-pane"/></svg><svg class="dn"><use href="#i-down"/></svg></span>
        </div>
        <div class="pathbar">
          <button class="icon" aria-label="Back"><svg><use href="#i-back"/></svg></button><button class="icon" aria-label="Forward"><svg><use href="#i-fwd"/></svg></button>
          <div class="path"><svg class="ic"><use href="#i-clap"/></svg><a href="#obj">obj</a><svg class="chev" viewBox="0 0 8 22"><path d="M1 0l6 11-6 11" fill="none" stroke="#111" stroke-width="1.500"/></svg><svg class="ic"><use href="#i-plato"/></svg><a href="#platonic">platonic_object1</a><button class="drop" aria-label="Path history"><svg><use href="#i-down"/></svg></button></div>
          <button class="icon" aria-label="Pin"><svg><use href="#i-pin"/></svg></button><button class="icon" aria-label="Link"><svg><use href="#i-target"/></svg></button>
        </div>
        <div class="netmenu"><span class="handle"><svg><use href="#i-up"/></svg></span><div class="menus"><button>Add</button><button>Edit</button><button>Go</button><button>View</button><button>Tools</button><button>Layout</button><button>Help</button></div><svg class="nxt"><use href="#i-right"/></svg></div>
        <div class="network">
          <p class="context">Geometry</p>
          <svg class="wires" width="364" height="204" viewBox="0 0 364 204" aria-hidden="true">
            <circle cx="78" cy="46.500" r="42.500" fill="#73446f"/><circle cx="78" cy="46.500" r="37" fill="#426699"/><circle cx="78" cy="46.500" r="29" fill="#9371cf"/>
            <path d="M78 66v78" stroke="#6d7c58" stroke-width="2"/>
            <circle cx="78" cy="66.500" r="4.500" fill="#b9b9b9"/><circle cx="78" cy="143.500" r="4.500" fill="#b9b9b9"/><circle cx="78" cy="183.500" r="4.500" fill="#b9b9b9"/>
            <rect x="34" y="32" width="88" height="29" rx="5" fill="#ccc" stroke="#ffd000" stroke-width="2"/><rect x="35.500" y="33.500" width="85" height="26" rx="4" fill="#ccc" stroke="#111" stroke-width="1.500"/>
            <path d="M98 34h13l-2 25H96z" fill="#df7bd9"/><path d="M111 34h7q2 0 2 3v19q0 3-2 3h-10z" fill="#00adf2"/>
            <path d="M47 34l-2 25M59 34l-2 25M99 34l-2 25M111 34l-2 25" stroke="#888"/>
            <path d="M72 45h13l4 7H69z" fill="#b6bfc4" stroke="#87929a"/>
            <rect x="35" y="150" width="86" height="27" rx="4" fill="#ccc"/><path d="M48 150l-2 27M60 150l-2 27M99 150l-2 27M111 150l-2 27" stroke="#888"/>
            <path d="M70 158l10-5 8 4v10l-9 5-8-5z" fill="#241416"/><path d="M78 154l4-1 5 3-4 2zM71 162l5 2v5l-5-3zM80 159l4-1v5l-4 2zM84 164l4-2v5l-4 2z" fill="#d8d4d4"/><path d="M69 154c3-3 5 1 3 3l7 5M69 163c3 3 6-1 3-4l5-4" stroke="#cf2b2b" stroke-width="1.800" fill="none"/>
          </svg>
          <p class="mark">Non-Commercial Edition</p>
          <span class="node n1">grid1</span><span class="node n2">uvflatten1</span><span class="node n3">uv</span>
        </div>
      </section>
    </div>
  </main>

  <footer class="playbar">
    <span class="handle low"><svg><use href="#i-down"/></svg></span>
    <div class="play-left">
      <div class="line">
        <div class="btns"><button aria-label="First frame"><svg viewBox="0 0 20 14"><path d="M1 2h3v10H1zM11 2v10L4 7zM19 2v10l-7-5z"/></svg></button><button aria-label="Play back"><svg viewBox="0 0 20 14"><path d="M15 1v12L5 7z"/></svg></button><button class="on" aria-label="Stop"><svg viewBox="0 0 20 14"><path d="M4 1h12v12H4z" stroke="#555"/></svg></button><button aria-label="Play"><svg viewBox="0 0 20 14"><path d="M5 1v12l10-6z"/></svg></button><button aria-label="Last frame"><svg viewBox="0 0 20 14"><path d="M16 2h3v10h-3zM9 2v10l7-5zM1 2v10l7-5z"/></svg></button></div>
        <input class="field frame" aria-label="Current frame" value="1">
        <div class="btns thin"><button aria-label="Step back"><svg viewBox="0 0 12 14"><path d="M7 3v8L1 7zM8 3h2v8H8z"/></svg></button><button aria-label="Step forward"><svg viewBox="0 0 12 14"><path d="M5 3v8l6-4zM2 3h2v8H2z"/></svg></button></div>
      </div>
      <div class="line">
        <div class="btns small"><button aria-label="Scoping"><svg viewBox="0 0 20 20"><path d="M3 3h13v13H3z" fill="#ddd"/><path d="M3 3h13v3H3z" fill="#698a7c"/><path d="M10 7v12l3-2 1 3 3-1-2-4h4z" fill="#111" stroke="#ddd" stroke-width=".8"/></svg></button><button aria-label="Audio"><svg viewBox="0 0 20 20"><path d="M1 8h4v6H1z" fill="#777"/><path d="M5 8l6-6v17l-6-5z" fill="#42545a"/><ellipse cx="12" cy="10.500" rx="4.500" ry="8" fill="#5e6f74" stroke="#ddd" stroke-width="1.500"/><ellipse cx="12" cy="10.500" rx="1.500" ry="3"/></svg></button><button aria-label="Loop mode"><svg viewBox="0 0 20 20"><path d="M1 16h18M3 13h7M4 13c2-10 12-10 13 1" fill="none" stroke="#ddd" stroke-width="2.500"/><path d="M2 7v7h6z" fill="#ddd"/></svg></button><button aria-label="Real time"><svg viewBox="0 0 20 20"><circle cx="10" cy="10" r="8" fill="none" stroke="#ddd" stroke-width="1.800"/><circle cx="10" cy="10" r="5.500" fill="none" stroke="#888"/><path d="M10 5v7M10 10h4" stroke="#ddd" stroke-width="1.500"/></svg></button></div>
        <div class="btns off"><button disabled aria-label="Previous key"><svg viewBox="0 0 12 12"><path d="M1 2h2v8H1z" fill="#48683c"/><path d="M10 2v8L4 6z" fill="#666"/></svg></button><button disabled aria-label="Next key"><svg viewBox="0 0 12 12"><path d="M9 2h2v8H9z" fill="#48683c"/><path d="M2 2v8l6-4z" fill="#666"/></svg></button></div>
      </div>
    </div>
    <div class="timeline">
      <div class="ruler">
        <div class="nums"><span>24</span><span>48</span><span>72</span><span>96</span><span>120</span><span>144</span><span>168</span><span>192</span><span>216</span></div>
        <svg class="ticks" viewBox="0 0 594 18" preserveAspectRatio="none" shape-rendering="crispEdges"><path d="M0 8.500h594" stroke="#aaa"/><path d="M56.500 1v16M116.500 1v16M175.500 1v16M235.500 1v16M294.500 1v16M354.500 1v16M413.500 1v16M473.500 1v16M532.500 1v16M593.500 1v16" stroke="#a8a8a8"/><path d="M11.500 4v9M26.500 4v9M41.500 4v9M71.500 4v9M86.500 4v9M101.500 4v9M130.500 4v9M145.500 4v9M160.500 4v9M190.500 4v9M205.500 4v9M220.500 4v9M249.500 4v9M264.500 4v9M279.500 4v9M309.500 4v9M324.500 4v9M339.500 4v9M368.500 4v9M383.500 4v9M398.500 4v9M428.500 4v9M443.500 4v9M458.500 4v9M487.500 4v9M502.500 4v9M517.500 4v9M547.500 4v9M562.500 4v9M577.500 4v9" stroke="#777"/></svg>
        <svg class="flag" viewBox="0 0 26 24" aria-hidden="true"><path d="M1 22V1h24v17H5z" fill="#080808" stroke="#fff" stroke-width="1.300"/></svg><span class="flagnum">1</span>
      </div>
      <div class="line">
        <input class="field dull" aria-label="Global start" value="1"><input class="field" aria-label="Range start" value="1">
        <svg class="range-cap"><use href="#i-right"/></svg><span class="range-line"></span><svg class="range-cap end"><use href="#i-left"/></svg>
        <input class="field" aria-label="Range end" value="240"><input class="field dull" aria-label="Global end" value="240">
      </div>
    </div>
    <div class="keying"><button class="key" aria-label="Set key"><svg viewBox="0 0 20 20"><circle cx="13" cy="7" r="4" fill="none" stroke="#6a6a6a" stroke-width="2.500"/><circle cx="13" cy="7" r="1" fill="#6a6a6a"/><path d="M10 10l-7 8M4 14l3 3M6 12l3 3" stroke="#6a6a6a" stroke-width="2"/></svg></button><button class="keydrop" aria-label="Key options"><svg><use href="#i-down"/></svg></button></div>
    <div class="channels">
      <div class="line"><button class="sq" aria-label="Auto update channels"><svg viewBox="0 0 20 20"><path d="M2 2h13v15H2z" fill="#aaa"/><path d="M3 5v3M3 11v3" stroke="#d22" stroke-width="3"/><path d="M3 8v3M3 14v3" stroke="#3a3" stroke-width="3"/><path d="M7 9c1-6 7-6 9-1M16 11c-1 6-7 6-9 1" fill="none" stroke="#222" stroke-width="4"/><path d="M7 9c1-6 7-6 9-1M16 11c-1 6-7 6-9 1" fill="none" stroke="#ddd" stroke-width="1.800"/><path d="M17 4v6h-5zM6 16v-6h5z" fill="#ddd"/></svg></button><button class="wide">0 keys, 0/0 channels<svg><use href="#i-up"/></svg></button></div>
      <div class="line"><button class="sq" aria-label="Channel graph"><svg viewBox="0 0 20 20"><path d="M2 2h16v16H2z" fill="#050505"/><path d="M2 12c4-12 6 0 8 0s4-12 8-4" fill="none" stroke="#4b88c8" stroke-width="1.300"/><path d="M2 9c3 8 5 8 8 2s4-4 8-1" fill="none" stroke="#d78b2a" stroke-width="1.300"/><path d="M2 11h16" stroke="#ddd"/></svg></button><span class="pick keyall"><select aria-label="Key scope"><option>Key All Channels</option></select><svg class="ud"><use href="#i-updown"/></svg></span></div>
    </div>
  </footer>
  <div class="status">
    <div class="status-tools"><button class="icon" aria-label="Cache"><svg viewBox="0 0 20 20"><path d="M2 9c0-6 8-8 12-4 5 3 2 9-2 9-2 3-5 0-7-1-3 0-3-2-3-4z" fill="#c9c9c4"/><path d="M5 7l4 2M8 4l2 3M11 9l3-2M6 11l4-1" stroke="#999"/><path d="M15 13l5 3-5 4z" fill="#8a8a8a"/></svg></button><button class="icon" aria-label="Recook"><svg viewBox="0 0 20 20"><path d="M3 8c2-6 10-6 13-2M17 12c-2 6-10 6-13 2" fill="none" stroke="#6c6c6c" stroke-width="2"/><path d="M18 3v6h-6zM2 17v-6h6z" fill="#6c6c6c"/></svg></button>
    <span class="pick auto"><select aria-label="Update mode"><option>Auto Update</option></select><svg class="ud"><use href="#i-updown"/></svg></span></div>
  </div>
</div>
</body>
</html>
```

FILE: styles.css
```css
* { box-sizing: border-box; }
html, body { height: 100%; }
body { margin: 0; background: #2b2b2b; color: #c2c2c2; font: 11px/16px "Noto Sans CJK JP", "Noto Sans", sans-serif; }
button, select, input { margin: 0; padding: 0; border: 0; border-radius: 0; background: none; color: inherit; font: inherit; min-width: 0; }
select { appearance: none; outline: 0; }
a { color: inherit; text-decoration: none; }
p, h1 { margin: 0; font-weight: 400; }
svg { display: block; flex: none; }
.sprite { position: absolute; width: 0; height: 0; }
.bold { font-weight: 700; }

.app { display: flex; flex-direction: column; min-height: 100vh; padding: 1px 2px 1px 1px; background: #1b1b1b; overflow: hidden; }

.titlebar { display: flex; align-items: center; height: 30px; padding-left: 8px; background: #fff; color: #000; }
.logo { width: 16px; height: 16px; margin-right: 5px; }
.titlebar h1 { flex: 1; min-width: 0; font: 12px/20px Roboto, sans-serif; white-space: nowrap; }
.winbtns { display: flex; }
.winbtns button { display: grid; place-items: center; width: 46px; height: 30px; }
.winbtns svg { width: 12px; height: 12px; }

.handle { display: flex; justify-content: center; flex: none; width: 8px; margin-right: 2px; padding-top: 2px; background: linear-gradient(90deg, #707070, #3c3c3c); color: #000; }
.handle svg { width: 8px; height: 6px; }
.handle.low { align-items: flex-end; padding-bottom: 2px; }

.menubar { display: flex; height: 27px; padding-left: 1px; border-bottom: 2px solid #000; background: linear-gradient(#303030, #3a3a3a); font-size: 12px; }
.menus { display: flex; align-items: center; gap: 9px; padding-left: 5px; }
.menubar .icon { margin: 0 5px 0 3px; }
.combo { display: flex; align-items: center; margin-top: 1px; padding-left: 5px; border-left: 1px solid #555; background: linear-gradient(90deg, transparent calc(100% - 24px), #2c2c2c calc(100% - 24px)), linear-gradient(#525252, #414141); }
.combo .ic { width: 15px; height: 15px; margin-right: 4px; }
.combo select { flex: 1; }
.combo .ud { width: 8px; height: 14px; margin-right: 8px; }
.desk { width: 127px; margin-left: 23px; }
.radial { width: 128px; margin-left: 5px; }
.scene { width: 171px; margin-left: auto; }
.icon { display: grid; place-items: center; flex: none; width: 24px; }
.icon svg { width: 18px; height: 18px; }
.more { position: relative; }
.more::after { content: ""; position: absolute; right: 1px; bottom: -2px; border: solid transparent; border-width: 4px 4px 0; border-top-color: #8f8f8f; }

.shelves { display: flex; height: 58px; padding-left: 1px; border-bottom: 2px solid #000; background: #000; }
.shelf { display: flex; flex-direction: column; min-width: 0; background: #262626; font-size: 9px; line-height: 10px; }
.shelf-a { flex: 492; }
.shelf-b { flex: 567; }
.shelf-tabs { display: grid; height: 17px; }
.shelf-a .shelf-tabs { grid-template-columns: 41fr 42fr 40fr 44fr 45fr 44fr 43fr 46fr 44fr 44fr 21fr 38fr; }
.shelf-b .shelf-tabs { grid-template-columns: 42fr 42fr 43fr 41fr 41fr 41fr 43fr 42fr 45fr 41fr 47fr 44fr 18fr 37fr; }
.shelf-tabs button { border: solid #050505; border-width: 0 1px 1px 0; background: linear-gradient(#3c3c3c, #2a2a2a); white-space: nowrap; overflow: hidden; }
.shelf-tabs .on { border-color: #4a4a4a; background: #4a4a4a; }
.stripes { background: repeating-linear-gradient(90deg, #0c0c0c 0 2px, #333 2px 3px); }
.extra { display: flex; align-items: center; justify-content: space-evenly; color: #ddd; }
.extra svg { width: 9px; height: 9px; }
.tools { display: grid; flex: 1; border-top: 1px solid #4a4a4a; background: linear-gradient(#484848, #363636); }
.shelf-a .tools { grid-template-columns: repeat(9, 41fr) 56fr 38fr 14fr; padding-left: 16px; }
.shelf-b .tools { grid-template-columns: 48fr 48fr 54fr 46fr 68fr 60fr 62fr 64fr 48fr 40fr 17fr; padding-left: 12px; }
.tools button { display: flex; flex-direction: column; align-items: center; gap: 1px; padding-top: 2px; white-space: nowrap; line-height: 14px; }
.tools svg { width: 20px; height: 20px; }
.tools .two { gap: 0; line-height: 9px; }
.tools .two svg { height: 18px; }
.next { display: grid; place-items: center; color: #8a8a8a; }
.tools .next svg { width: 8px; height: 9px; }
.shelf-grip { display: grid; place-items: center; width: 9px; margin-right: 2px; background: linear-gradient(90deg, #2c2c2c, #4c4c4c); }
.dots { display: block; width: 5px; height: 20px; background: conic-gradient(from 90deg at 1px 1px, transparent 90deg, #8a8a8a 0) 0 0 / 2px 2px; opacity: .7; }
.shelf-grip .dots { height: 16px; filter: brightness(0); }

.work { display: flex; flex: 1; min-height: 570px; }
.gutter { display: flex; flex-direction: column; align-items: center; justify-content: center; gap: 16px; flex: none; width: 8px; border: solid #000; border-width: 0 1px; background: linear-gradient(90deg, #555, #3c3c3c); color: #8a8a8a; }
.gutter svg { width: 4px; height: 6px; }
.pane { display: flex; flex-direction: column; min-width: 0; background: #3a3a3a; }
.scene-pane { flex: 701; }
.right { display: flex; flex-direction: column; flex: 364; min-width: 0; }

.tabs { display: grid; flex: none; height: 18px; background: #262626; font-size: 10px; line-height: 16px; }
.tabs-scene { grid-template-columns: 81fr 107fr 88fr 102fr 98fr 131fr 94fr; }
.tabs-param { grid-template-columns: 59fr 74fr 124fr 107fr; }
.tabs-net { height: 19px; grid-template-columns: 74fr 78fr 78fr 77fr 57fr; }
.tabs button { display: flex; align-items: center; justify-content: space-between; padding: 0 3px 0 6px; border-right: 1px solid #111; border-left: 1px solid #3a3a3a; background: linear-gradient(#303030, #262626); white-space: nowrap; }
.tabs .on { border-color: #494949; background: linear-gradient(#444, #4c4c4c); }
.tabs .it { font-style: italic; }
.tabs button svg { width: 10px; height: 10px; }
.tab-end { display: flex; align-items: center; padding: 0 4px 0 8px; color: #ddd; }
.plus { width: 10px; height: 10px; margin-right: auto; }
.pn { width: 10px; height: 8px; margin-right: 9px; }
.dn { width: 9px; height: 9px; }

.pathbar { display: flex; align-items: center; flex: none; height: 33px; padding: 0 1px; background: linear-gradient(#494949, #3a3a3a); }
.path { display: flex; align-items: stretch; flex: 1; height: 24px; margin: 0 6px 0 5px; border: 1px solid #000; border-bottom-width: 2px; background: linear-gradient(#494949, #3c3c3c); color: #d6d6d6; }
.path .ic { width: 17px; height: 17px; align-self: center; margin: 0 4px 0 5px; }
.path a { line-height: 20px; }
.chev { width: 8px; height: 22px; margin-left: 6px; }
.drop { display: grid; place-items: center; width: 18px; margin-left: auto; background: #333; color: #8b8b8b; }
.drop svg { width: 8px; height: 9px; }
.view-icons { display: flex; padding-left: 10px; }

.opbar { display: flex; flex: none; height: 33px; border: 1px solid #000; background: #303030; }
.opitems { display: flex; align-items: center; flex: 1; gap: 5px; border-top: 1px solid #555; padding-left: 2px; white-space: nowrap; }
.opitems .ic { width: 18px; height: 18px; }
.opitems label { margin-left: 5px; }
.opitems .pick + label, .opitems .w46 + label { margin-left: 8px; }
.opitems .field + .field + label { margin-left: 0; }
.opitems label + .pick, .opitems label + .field { margin-left: 8px; }
.opitems .view-icons { margin-left: auto; padding: 0; }
.pick { display: flex; align-items: center; height: 21px; border: 1px solid #222; border-top-color: #5c5c5c; background: linear-gradient(90deg, transparent calc(100% - 22px), #2d2d2d calc(100% - 22px)), linear-gradient(#545454, #434343); }
.pick select { flex: 1; padding-left: 13px; height: 19px; line-height: 17px; }
.pick .ud { width: 8px; height: 13px; margin-right: 6px; }
.w72 { width: 72px; } .w92 { width: 92px; } .w118 { width: 118px; } .w152 { width: 152px; }
.w38 { width: 39px; } .w46 { width: 46px; }
.field { height: 22px; padding-left: 4px; border: 1px solid #282828; background: #131313; color: #f0f0f0; font-family: "DejaVu Sans Mono", monospace; font-size: 12px; }
.field:not(.bold) { color: #d8d8d8; }
.opitems .field { flex: none; }

.stage { display: flex; flex: 1; min-height: 0; }
.side { display: flex; flex-direction: column; flex: none; background: #3b3b3b; }
.side-l { width: 34px; align-items: center; }
.side-r { width: 27px; align-items: center; border-right: 1px solid #000; }
.grab { display: flex; flex: none; align-self: stretch; height: 9px; padding: 1px 3px; border: 1px solid #000; background: linear-gradient(#666, #444); color: #000; }
.side-r .grab { justify-content: flex-end; }
.grab svg { width: 6px; height: 6px; }
.group { margin-top: 6px; border: 1px solid #000; background: linear-gradient(#505050, #333); }
.side button { display: grid; place-items: center; flex: none; width: 26px; height: 28px; }
.side .group button { height: 24px; border-bottom: 1px solid #111; }
.side button svg { width: 24px; height: 24px; }
.side .on { border: 2px solid #555; background: linear-gradient(#8597a0, #b3bcbe); }
.side .group .on { border-width: 1px; }
.side hr { align-self: stretch; margin: 3px 2px; border: 0; border-top: 1px solid #2c2c2c; }
.stack { display: flex; flex-direction: column; align-items: center; }
.side-l .first { margin-top: 21px; }
.side-l .half { width: 24px; height: 12px; margin-top: 2px; }
.side .morearrow { width: 11px; height: 10px; color: #8a8a8a; }
.side-r button { height: 25px; width: 24px; }
.side-r hr { margin: 0 2px; }
.side-r .first { margin-top: 20px; }
.side-r button svg { width: 22px; height: 22px; }
.side-r .half { width: 24px; height: 12px; margin-top: 3px; }
.viewport { position: relative; flex: 1; min-width: 0; background: #91a3ab; }
.scene-art { position: absolute; inset: 0; width: 100%; height: 100%; }
.hud { font: 11px "DejaVu Sans Mono", monospace; fill: #fff; }
.hud text { filter: drop-shadow(1px 1px 0 #444); }
.axis { font: 11px "DejaVu Sans Mono", monospace; }
.camera-bar { position: absolute; top: 4px; right: 6px; display: flex; gap: 7px; }
.camera-bar button { display: flex; align-items: center; gap: 2px; height: 20px; padding: 0 5px 1px; border: 2px solid #aab6bb; border-radius: 10px; background: #5d6f79; color: #e2e6e8; line-height: 14px; }
.camera-bar button svg { width: 7px; height: 7px; }
.camera-bar .round { width: 20px; padding: 0; justify-content: center; margin-right: -3px; }
.camera-bar .round svg { width: 18px; height: 18px; }
.edition { position: absolute; right: 12px; bottom: 8px; color: #f8f81c; font-size: 11px; }

.nodebar { display: flex; align-items: center; flex: none; height: 29px; padding: 0 2px 0 5px; border-top: 1px solid #000; background: #333; }
.nodebar .ic { width: 18px; height: 18px; margin-right: 3px; }
.nodebar label { font-weight: 700; margin-right: 5px; }
.nodebar .field { flex: 1; margin-right: 1px; }
.param-area { display: flex; height: 202px; border-top: 1px solid #222; overflow: hidden; }
.params { flex: 1; min-width: 0; }
.row { display: grid; grid-template-columns: 125px 1fr; gap: 14px; align-items: center; height: 25px; }
.tall { height: 26px; }
.row label { text-align: right; }
.fields { display: flex; gap: 4px; }
.fields .field { flex: 1; width: 0; }
.fields .w68 { flex: none; width: 68px; }
input[type="range"] { appearance: none; flex: 1; height: 22px; margin-right: 2px; background: repeating-linear-gradient(90deg, #666 0 1px, transparent 1px 13px) 2px 16px / 100% 2px no-repeat; }
input[type="range"]::-webkit-slider-runnable-track { height: 5px; border: solid #000; border-width: 1px 0; background: linear-gradient(90deg, #1456a0 79%, #000 79%); }
input[type="range"]::-webkit-slider-thumb { appearance: none; width: 6px; height: 20px; margin-top: -8px; border: 1px solid #222; background: #999; }
.vscroll { display: flex; flex-direction: column; align-items: center; flex: none; width: 14px; margin-right: 2px; background: #252525; }
.thumb { display: grid; place-items: center; width: 13px; height: 110px; margin-bottom: auto; border-bottom: 1px solid #777; background: linear-gradient(90deg, #555, #393939); }
.thumb .dots { width: 8px; height: 11px; filter: brightness(0); }
.vscroll svg { width: 14px; height: 18px; padding: 3px; background: #353535; border-top: 1px solid #000; }
.dim { color: #4c4c4c; } .lit { color: #aaa; margin-bottom: 2px; }

.hsplit { display: flex; align-items: center; justify-content: center; gap: 20px; flex: none; height: 6px; border-top: 1px solid #777; background: #444; color: #888; }
.hsplit svg { width: 6px; height: 4px; }
.hsplit .dots { width: 20px; height: 4px; }
.net-pane { flex: 1; }
.netmenu { display: flex; flex: none; height: 26px; border: 1px solid #000; background: linear-gradient(#3a3a3a, #2e2e2e); font-size: 12px; }
.netmenu .menus { gap: 14px; padding-left: 24px; }
.nxt { width: 8px; height: 9px; margin: 8px 4px 0 auto; color: #8a8a8a; }
.network { position: relative; flex: 1; background: #303030; overflow: hidden; }
.wires { position: absolute; left: 0; top: 0; }
.mark { position: absolute; left: 73px; top: 10px; color: #fff; font-size: 19px; line-height: 30px; opacity: .12; white-space: nowrap; }
.context { position: absolute; right: 12px; top: 15px; color: #4e4e4e; font-size: 23px; line-height: 30px; font-weight: 700; }
.node { position: absolute; left: 129px; color: #ccc; font-size: 17px; line-height: 24px; }
.n1 { top: 33px; } .n2 { top: 150px; } .n3 { top: 180px; color: #6b97d6; font-size: 15px; }

.playbar { display: flex; flex: none; height: 71px; padding-left: 1px; border-top: 1px solid #777; border-bottom: 1px solid #000; background: #2f2f2f; }
.play-left { flex: none; padding: 7px 6px 0 4px; }
.line { display: flex; align-items: center; gap: 3px; }
.play-left .line + .line { margin-top: 7px; gap: 5px; }
.btns { display: flex; background: linear-gradient(#4f4f4f, #3a3a3a); }
.btns button { display: grid; place-items: center; width: 27px; height: 28px; border: 1px solid #161616; border-left-color: #555; }
.btns .on { background: linear-gradient(#8298a3, #a9b5ba); }
.btns svg { width: 20px; height: 14px; fill: #ddd; }
.btns.thin button { width: 14px; }
.thin svg { width: 12px; }
.btns.small button { height: 24px; }
.small svg { width: 20px; height: 20px; }
.off { opacity: .6; }
.btns.off button { width: 23px; height: 24px; }
.off svg { width: 12px; height: 12px; }
.frame { width: 46px; height: 28px; }
.timeline { flex: 1; min-width: 0; }
.ruler { position: relative; height: 43px; }
.nums { display: grid; grid-template-columns: repeat(9, 1fr); margin-left: 5%; margin-right: 5%; font-size: 9px; line-height: 14px; color: #8e8e8e; text-align: center; }
.ticks { width: 100%; height: 18px; }
.flag { position: absolute; left: -1px; top: 1px; width: 26px; height: 24px; }
.flagnum { position: absolute; left: 8px; top: 3px; color: #fff; font-family: "DejaVu Sans Mono", monospace; }
.timeline .field { width: 42px; flex: none; }
.timeline .line { gap: 0; padding-top: 1px; }
.timeline .field + .field { margin-left: 3px; }
.dull { background: #282828; }
.range-cap { width: 8px; height: 10px; margin-left: 1px; color: #aaa; }
.range-cap.end { margin: 0 2px 0 0; }
.range-line { flex: 1; height: 3px; background: #7d7979; }
.keying { display: flex; align-items: center; flex: none; margin: 0 6px 0 4px; }
.key { display: grid; place-items: center; width: 40px; height: 40px; border: 1px solid #202020; border-radius: 20px; background: #363636; }
.key svg { width: 18px; height: 18px; }
.keydrop { display: grid; place-items: center; width: 17px; height: 20px; margin-left: -2px; border: 1px solid #181818; background: #3c3c3c; color: #8b8b8b; }
.keydrop svg { width: 9px; height: 9px; }
.channels { flex: none; width: 183px; margin-right: 4px; padding-top: 7px; }
.channels .line { gap: 5px; }
.channels .line + .line { margin-top: 4px; }
.sq { display: grid; place-items: center; width: 24px; height: 24px; border: 1px solid #111; background: #494949; }
.sq svg { width: 18px; height: 18px; }
.wide { display: flex; align-items: center; flex: 1; justify-content: flex-end; gap: 24px; height: 25px; padding-right: 4px; border: 1px solid #1a1a1a; background: linear-gradient(#565656, #3d3d3d); white-space: nowrap; }
.wide svg { width: 9px; height: 9px; color: #888; }
.keyall { flex: 1; margin-right: 2px; }
.status { display: flex; justify-content: flex-end; flex: none; height: 26px; background: #191919; }
.status-tools { display: flex; align-items: center; height: 25px; background: #323232; gap: 3px; }
.auto { width: 118px; height: 25px; margin-left: 1px; }
.auto select { padding-left: 15px; }
```
